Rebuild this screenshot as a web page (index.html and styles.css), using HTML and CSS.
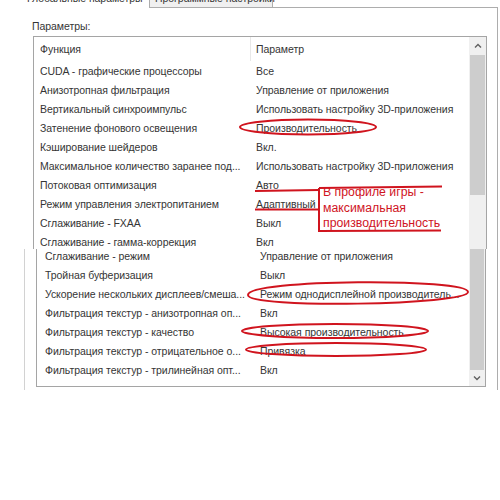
FILE: index.html
```html
<!DOCTYPE html>
<html lang="ru">
<head>
  <meta charset="UTF-8" />
  <title>Параметры 3D</title>
  <link rel="stylesheet" href="styles.css">
</head>
<body>
  <div class="shot top">
    <div class="tabs">
      <div class="tab active">Глобальные параметры</div>
      <div class="tab other">Программные настройки</div>
      <div class="tab-rest"></div>
    </div>
    <div class="panel">
      <div class="label">Параметры:</div>
      <div class="listbox">
        <div class="rows">
          <div class="row head"><div class="c1">Функция</div><div class="c2">Параметр</div></div>
          <div class="row"><div class="c1">CUDA - графические процессоры</div><div class="c2">Все</div></div>
          <div class="row"><div class="c1">Анизотропная фильтрация</div><div class="c2">Управление от приложения</div></div>
          <div class="row"><div class="c1">Вертикальный синхроимпульс</div><div class="c2">Использовать настройку 3D-приложения</div></div>
          <div class="row"><div class="c1">Затенение фонового освещения</div><div class="c2">Производительность</div></div>
          <div class="row"><div class="c1">Кэширование шейдеров</div><div class="c2">Вкл.</div></div>
          <div class="row"><div class="c1">Максимальное количество заранее под...</div><div class="c2">Использовать настройку 3D-приложения</div></div>
          <div class="row"><div class="c1">Потоковая оптимизация</div><div class="c2">Авто</div></div>
          <div class="row"><div class="c1">Режим управления электропитанием</div><div class="c2">Адаптивный</div></div>
          <div class="row"><div class="c1">Сглаживание - FXAA</div><div class="c2">Выкл</div></div>
          <div class="row"><div class="c1">Сглаживание - гамма-коррекция</div><div class="c2">Вкл</div></div>
        </div>
        <div class="scroll">
          <div class="arrow">
            <svg width="8" height="5" viewBox="0 0 8 5"><path d="M1 4.5 L4 1.5 L7 4.5" fill="none" stroke="#606060" stroke-width="1.4"/></svg>
          </div>
          <div class="thumb"></div>
        </div>
      </div>
    </div>
  </div>

  <div class="shot bottom">
    <div class="frame">
      <div class="listbox">
        <div class="rows">
          <div class="row"><div class="c1">Сглаживание - режим</div><div class="c2">Управление от приложения</div></div>
          <div class="row"><div class="c1">Тройная буферизация</div><div class="c2">Выкл</div></div>
          <div class="row"><div class="c1">Ускорение нескольких дисплеев/смеша...</div><div class="c2">Режим однодисплейной производитель...</div></div>
          <div class="row"><div class="c1">Фильтрация текстур - анизотропная оп...</div><div class="c2">Вкл</div></div>
          <div class="row"><div class="c1">Фильтрация текстур - качество</div><div class="c2">Высокая производительность</div></div>
          <div class="row"><div class="c1">Фильтрация текстур - отрицательное о...</div><div class="c2">Привязка</div></div>
          <div class="row"><div class="c1">Фильтрация текстур - трилинейная опт...</div><div class="c2">Вкл</div></div>
        </div>
        <div class="scroll">
          <div class="thumb"></div>
          <div class="arrow">
            <svg width="8" height="5" viewBox="0 0 8 5"><path d="M1 0.5 L4 3.5 L7 0.5" fill="none" stroke="#606060" stroke-width="1.4"/></svg>
          </div>
        </div>
      </div>
    </div>
  </div>

  <!-- red marks drawn over the screenshot -->
  <svg class="marks" width="500" height="500" viewBox="0 0 500 500">
    <g fill="none" stroke="#d0141e" stroke-width="2">
      <ellipse cx="308" cy="127" rx="68" ry="7.5"/>
      <path d="M255 191 L319 190 M319 188 L442 186.5"/>
      <path d="M255 209.5 L319 209.5"/>
      <path d="M319 188 L319 231 L441 230.5"/>
      <path d="M248 295 C248 279 468 278 468 292 C468 305 248 309 248 295 Z"/>
      <ellipse cx="335" cy="331" rx="93" ry="7"/>
      <ellipse cx="336" cy="349.5" rx="90" ry="6.5"/>
    </g>
  </svg>
  <div class="note">В профиле игры -<br>максимальная<br>производительность</div>
</body>
</html>
```

FILE: styles.css
```css
body {
  margin: 0;
  background: #fff;
  font-family: "Liberation Sans", Arial, sans-serif;
  font-size: 10.5px;
  letter-spacing: -0.05px;
  color: #353535;
}
.shot {
  width: 500px;
  overflow: hidden;
}
.top { height: 249px; }
.bottom { height: 141px; }

.tabs {
  display: flex;
  width: 498px;
  height: 15px;
  margin-top: -7px;
}
.tab {
  box-sizing: border-box;
  height: 15px;
  line-height: 11px;
  padding-left: 5px;
  white-space: nowrap;
}
.tab.active { margin-left: 22px; width: 127px; }
.tab.other {
  width: 124px;
  background: #f0f0f0;
  border: 1px solid #adadad;
  border-top: none;
}
.tab-rest {
  flex: 1;
  box-sizing: border-box;
  height: 15px;
  border-bottom: 1px solid #adadad;
}

.panel {
  box-sizing: border-box;
  width: 498px;
  height: 241px;
  padding-left: 33px;
  border-right: 1px solid #adadad;
}
.label {
  padding-top: 12px;
  margin-left: -1px;
  line-height: 13px;
}

.listbox {
  display: flex;
  box-sizing: border-box;
  border: 1px solid #a5a5a5;
  background: #fff;
}
.top .listbox {
  margin-top: 3px;
  width: 454px;
  height: 260px;
}
.rows { flex: 1; min-width: 0; }
.row {
  display: flex;
  align-items: center;
  height: 19px;
  white-space: nowrap;
}
.row.head { height: 24px; }
.c1, .c2 {
  box-sizing: border-box;
  padding-left: 6px;
  overflow: hidden;
}
.c1 { width: 216px; flex: none; }
.c2 { flex: 1; }
.head .c2 {
  border-left: 1px solid #e8e8e8;
  padding-left: 5px;
  line-height: 24px;
}

.scroll {
  display: flex;
  flex-direction: column;
  width: 17px;
  background: #f0f0f0;
}
.arrow {
  height: 17px;
  display: flex;
  align-items: center;
  justify-content: center;
}
.thumb {
  background: #cdcdcd;
  margin: 0 1px;
}
.top .thumb { height: 140px; margin-top: 1px; }

.frame {
  display: flex;
  align-items: flex-start;
  box-sizing: border-box;
  width: 474px;
  height: 141px;
  margin-left: 24px;
  padding-left: 11px;
  border-left: 1px solid #d2d2d2;
  border-right: 1px solid #adadad;
}
.bottom .listbox {
  margin-top: -4px;
  width: 450px;
  height: 142px;
}
.bottom .c1 { width: 215px; padding-left: 8px; }
.bottom .c2 { padding-left: 8px; }
.bottom .scroll { width: 16px; }
.bottom .thumb { flex: 1; }
.bottom .arrow { height: 16px; }

.marks {
  position: absolute;
  top: 0;
  left: 0;
  pointer-events: none;
}
.note {
  position: absolute;
  left: 323px;
  top: 185px;
  font-size: 12.3px;
  letter-spacing: 0;
  line-height: 15.5px;
  color: #d0141e;
}
```
